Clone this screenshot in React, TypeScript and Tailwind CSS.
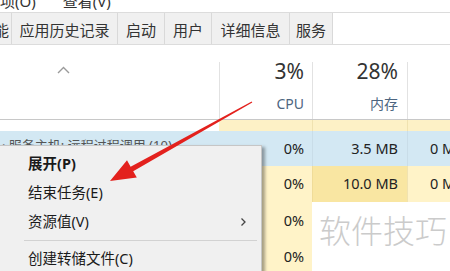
import React from "react";

const FONT = "font-['Noto_Sans','Noto_Sans_CJK_SC',sans-serif]";

function Tab({ label, w }: { label: string; w: string }) {
  return (
    <div className={`${w} shrink-0 h-full flex items-center justify-center pt-[4px] border-r border-[#d9d9d9] bg-[#f0f0f0] text-[15px] text-[#333] whitespace-nowrap overflow-hidden`}>
      {label}
    </div>
  );
}

export default function App() {
  return (
    <div className={`relative w-[450px] h-[271px] overflow-hidden bg-white ${FONT}`}>
      {/* menu bar (cut at top) */}
      <div className="h-[12px] overflow-hidden">
        <div className="flex mt-[-9px] ml-[-15px] text-[15px] leading-[20px] text-[#333] whitespace-nowrap">
          <span>选项(O)</span>
          <span className="ml-[27px]">查看(V)</span>
        </div>
      </div>

      {/* tab strip */}
      <div className="h-[33px] flex border-t border-b border-[#dcdcdc] bg-white">
        <div className="w-[12px] shrink-0 h-full flex items-center justify-end pt-[4px] border-r border-[#d9d9d9] bg-[#f0f0f0] text-[15px] text-[#333] overflow-hidden">
          <span className="mr-[2px] whitespace-nowrap">能</span>
        </div>
        <Tab label="应用历史记录" w="w-[106px]" />
        <Tab label="启动" w="w-[47px]" />
        <Tab label="用户" w="w-[47px]" />
        <Tab label="详细信息" w="w-[78px]" />
        <Tab label="服务" w="w-[43px]" />
      </div>

      {/* header */}
      <div className="h-[75px] flex pt-[17px] border-b border-[#c8c8c8]">
        <div className="w-[219px] shrink-0 relative">
          <svg className="absolute left-[57px] top-[4px]" width="13" height="8" viewBox="0 0 13 8">
            <polyline points="1,7 6.5,1.5 12,7" fill="none" stroke="#9a9a9a" strokeWidth="1.4" />
          </svg>
        </div>
        <div className="w-[93px] shrink-0 border-l border-[#e2e2e2] flex flex-col items-end pr-[8px]">
          <div className="text-[21px] leading-[20px] text-[#333] mt-[-1px]">3%</div>
          <div className="text-[14px] leading-[18px] text-[#4d6580] mt-[14px]">CPU</div>
        </div>
        <div className="w-[95px] shrink-0 border-l border-[#e2e2e2] flex flex-col items-end pr-[9px]">
          <div className="text-[21px] leading-[20px] text-[#333] mt-[-1px]">28%</div>
          <div className="text-[14px] leading-[18px] text-[#4d6580] mt-[14px]">内存</div>
        </div>
        <div className="flex-1 min-w-0 border-l border-[#e2e2e2]" />
      </div>

      {/* group strip */}
      <div className="h-[11px] flex">
        <div className="w-[219px] shrink-0 bg-white" />
        <div className="w-[93px] shrink-0 bg-[#fdf1c6]" />
        <div className="w-[95px] shrink-0 bg-[#fdf1c6] border-l border-[#f0e2b0]" />
        <div className="flex-1 min-w-0 bg-[#fdf1c6] border-l border-[#f0e2b0]" />
      </div>

      {/* row 1 (selected) */}
      <div className="h-[35px] flex bg-[#d3e8f3] text-[14.5px] text-[#222]">
        <div className="w-[219px] shrink-0 flex items-center pl-[2px] text-[13px] text-[#555] whitespace-nowrap overflow-hidden">
          <span className="mt-[-6px]">· 服务主机: 远程过程调用 (10)</span>
        </div>
        <div className="w-[93px] shrink-0 flex items-center justify-end pr-[8px]">0%</div>
        <div className="w-[95px] shrink-0 flex items-center justify-end pr-[9px] border-l border-[#c9dde8]">3.5 MB</div>
        <div className="flex-1 min-w-0 flex items-center pl-[22px] border-l border-[#c9dde8] whitespace-nowrap overflow-hidden">0 MB/秒</div>
      </div>

      {/* row 2 */}
      <div className="h-[36px] flex text-[14.5px] text-[#222]">
        <div className="w-[219px] shrink-0 bg-white" />
        <div className="w-[93px] shrink-0 flex items-center justify-end pr-[8px] bg-[#fff3c8]">0%</div>
        <div className="w-[95px] shrink-0 flex items-center justify-end pr-[9px] bg-[#f9e6a2] border-l border-[#f0dc98]">10.0 MB</div>
        <div className="flex-1 min-w-0 flex items-center pl-[22px] bg-[#fff3c8] border-l border-[#f0e2b0] whitespace-nowrap overflow-hidden">0 MB/秒</div>
      </div>

      {/* row 3 */}
      <div className="h-[37px] flex text-[14.5px] text-[#222]">
        <div className="w-[219px] shrink-0 bg-white" />
        <div className="w-[93px] shrink-0 flex items-center justify-end pr-[8px] bg-[#fff3c8]">0%</div>
        <div className="flex-1 min-w-0 bg-white" />
      </div>

      {/* row 4 */}
      <div className="h-[36px] flex text-[14.5px] text-[#222]">
        <div className="w-[219px] shrink-0 bg-white" />
        <div className="w-[93px] shrink-0 flex items-center justify-end pr-[8px] bg-[#fff3c8]">0%</div>
        <div className="flex-1 min-w-0 bg-white" />
      </div>

      {/* watermark */}
      <div className="absolute left-[319px] top-[208px] text-[32px] leading-[42px] text-[#cbcbcb] font-['Noto_Sans_CJK_SC',sans-serif] font-light whitespace-nowrap">
        软件技巧
      </div>

      {/* context menu */}
      <div className="absolute left-[-2px] top-[145px] w-[264px] h-[132px] bg-[#f0f0f0] border border-[#c6c6c6] shadow-[3px_2px_3px_rgba(0,0,0,0.35)] pt-[3px] text-[14.5px] text-[#1a1a1a]">
        <div className="h-[29px] flex items-center pl-[29px] font-bold">展开(P)</div>
        <div className="h-[29px] flex items-center pl-[29px]">结束任务(E)</div>
        <div className="h-[29px] flex items-center pl-[29px] pr-[14px] justify-between">
          <span>资源值(V)</span>
          <svg width="7" height="10" viewBox="0 0 7 10">
            <polyline points="1.5,1.5 5,5 1.5,8.5" fill="none" stroke="#444" strokeWidth="1.3" />
          </svg>
        </div>
        <div className="h-[8px] flex items-center pl-[25px] pr-[4px]">
          <div className="h-px w-full bg-[#d2d2d2]" />
        </div>
        <div className="h-[29px] flex items-center pl-[29px]">创建转储文件(C)</div>
      </div>

      {/* red arrow */}
      <svg className="absolute left-0 top-0 pointer-events-none" width="450" height="271" viewBox="0 0 450 271">
        <polygon
          points="110,181 127,160.2 130.6,166.8 251.7,101.4 252.3,102.6 133.2,171.2 136.8,177.6"
          fill="#e3211d"
        />
      </svg>
    </div>
  );
}
